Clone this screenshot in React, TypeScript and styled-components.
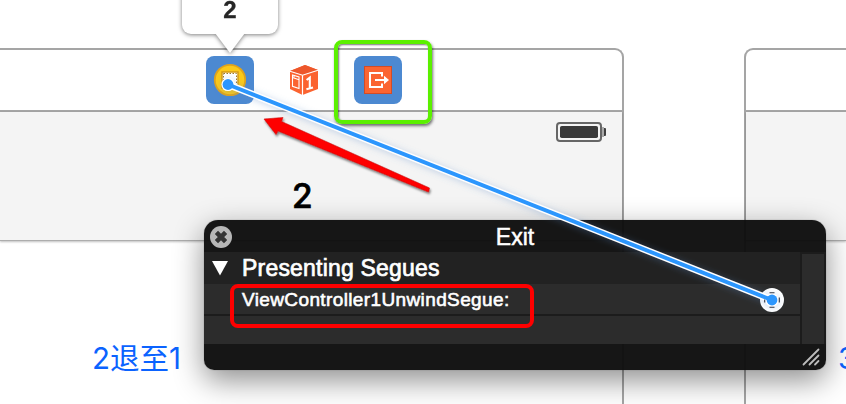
import React from 'react';
import styled, { createGlobalStyle } from 'styled-components';

const GlobalStyle = createGlobalStyle`
  *, *::before, *::after { box-sizing: border-box; }
  html, body { margin: 0; padding: 0; overflow: hidden; background: #fff; }
  body { font-family: 'Liberation Sans', 'Noto Sans CJK SC', sans-serif; }
`;

const Canvas = styled.main`
  position: relative;
  display: flex;
  justify-content: space-between;
  width: 846px;
  height: 404px;
  padding-top: 48px;
  overflow: hidden;
  background: #fff;
`;

const Scene = styled.section<{ $side: 'left' | 'right' }>`
  display: flex;
  flex-direction: column;
  width: ${p => (p.$side === 'left' ? 624 : 102)}px;
  height: 370px;
  border: 2px solid #a5a5a5;
  border-bottom: 0;
  ${p =>
    p.$side === 'left'
      ? 'border-left: 0; border-top-right-radius: 9px;'
      : 'border-right: 0; border-top-left-radius: 9px;'}
`;

const Dock = styled.header`
  display: flex;
  align-items: center;
  gap: 26px;
  height: 62px;
  padding: 0 0 0 206px;
  border-bottom: 2px solid #a5a5a5;
`;

const DockItem = styled.div<{ $selected?: boolean }>`
  display: grid;
  place-items: center;
  width: 48px;
  height: 48px;
  border-radius: 8px;
  background: ${p => (p.$selected ? '#4c89d1' : 'transparent')};
`;

const NavBar = styled.div`
  display: flex;
  flex-direction: column;
  height: 129px;
  background: #f4f4f4;
  border-bottom: 1px solid #adadad;
  box-shadow: 0 1px 2px rgba(0, 0, 0, 0.25);
`;

const StatusBar = styled.div`
  display: flex;
  justify-content: flex-end;
  height: 40px;
  padding: 10px 15px 0 0;
`;

const NavTitle = styled.h1`
  margin: 25px 0 0 292px;
  font: 500 33.5px/38px Inter, 'Liberation Sans', sans-serif;
  color: #000;
  -webkit-text-stroke: 0.7px #000;
`;

const SceneBody = styled.div`
  display: flex;
  align-items: flex-start;
  padding: 98px 0 0 92px;
`;

const SceneButton = styled.button`
  padding: 0;
  border: 0;
  background: none;
  color: #0b63ff;
  font: 400 29.5px/38px Inter, 'Noto Sans CJK SC', sans-serif;
  white-space: nowrap;
`;

const Bubble = styled.div`
  position: absolute;
  left: 182px;
  top: -20px;
  width: 96px;
  height: 74px;
  filter: drop-shadow(0 1px 2px rgba(0, 0, 0, 0.5));
`;

const BubbleBody = styled.div`
  display: flex;
  justify-content: center;
  height: 54px;
  padding-top: 16px;
  border-radius: 9px;
  background: #fff;
  color: #262626;
  font: bold 24px/27px 'Liberation Sans', sans-serif;
  -webkit-text-stroke: 0.3px #262626;
`;

const BubbleTail = styled.div`
  width: 0;
  height: 0;
  margin: -1px auto 0;
  border: 15px solid transparent;
  border-top: 20px solid #fff;
  border-bottom: 0;
`;

const Panel = styled.aside`
  position: absolute;
  left: 204px;
  top: 220px;
  width: 622px;
  height: 150px;
  display: flex;
  flex-direction: column;
  overflow: hidden;
  border-radius: 14px 14px 10px 10px;
  background: rgba(12, 12, 12, 0.96);
  color: #fff;
`;

const PanelShadow = styled.div`
  position: absolute;
  left: 204px;
  top: 220px;
  width: 622px;
  height: 150px;
  border-radius: 14px 14px 10px 10px;
  box-shadow: 0 0 1px rgba(0, 0, 0, 0.5), 0 10px 30px rgba(0, 0, 0, 0.45);
`;

const PanelTitle = styled.div`
  display: grid;
  grid-template-columns: 22px 1fr 22px;
  align-items: center;
  height: 32px;
  padding: 1px 6px 0;
  font-size: 23px;
  line-height: 28px;
  text-align: center;
  -webkit-text-stroke: 0.5px #fff;
`;

const PanelContent = styled.div`
  display: flex;
  height: 92px;
  background: #1c1c1c;
`;

const Outline = styled.div`
  width: 596px;
`;

const SectionRow = styled.div`
  display: flex;
  align-items: center;
  gap: 12px;
  height: 32px;
  padding-left: 8px;
  background: #222;
  font-size: 23px;
  letter-spacing: 0.2px;
  -webkit-text-stroke: 0.7px #fff;
`;

const SegueRow = styled.div<{ $last?: boolean }>`
  display: flex;
  align-items: center;
  justify-content: space-between;
  height: ${p => (p.$last ? 28 : 30)}px;
  margin-bottom: ${p => (p.$last ? 0 : 2)}px;
  padding: 2px 16px 0 38px;
  background: #2c2c2c;
  font-size: 19px;
  letter-spacing: 0.38px;
  -webkit-text-stroke: 0.6px #fff;
`;

const ScrollTrack = styled.div`
  width: 22px;
  height: 90px;
  margin: 2px 0 0 2px;
  background: #2c2c2c;
`;

const PanelFooter = styled.div`
  display: flex;
  justify-content: flex-end;
  padding: 4px 6px 0 0;
`;

const Highlight = styled.div<{ $kind: 'exit' | 'segue' }>`
  position: absolute;
  ${p =>
    p.$kind === 'exit'
      ? 'left: 334px; top: 40px; width: 98px; height: 84px; border: 4px solid #5bf000; border-radius: 8px; box-shadow: 1px 2px 3px rgba(0,0,0,.55), inset 1px 1px 2px rgba(0,0,0,.55);'
      : 'left: 230px; top: 284px; width: 304px; height: 44px; border: 4px solid #fe0000; border-radius: 8px;'}
`;

const Overlay = styled.svg`
  position: absolute;
  inset: 0;
  pointer-events: none;
`;

const ControllerIcon = () => (
  <svg width="34" height="34" viewBox="0 0 34 34">
    <circle cx="17" cy="17" r="15.2" fill="#fcc918" stroke="#dfa31c" strokeWidth="1.8" />
    <rect x="9" y="9" width="16" height="16" fill="#fff" stroke="#d59a14" strokeWidth="1.5" />
    <rect x="10.5" y="10.5" width="13" height="13" fill="none" stroke="#9c792c" strokeWidth="1" strokeDasharray="1.5 1.5" />
  </svg>
);

const ResponderIcon = () => (
  <svg width="30" height="32" viewBox="0 0 30 32">
    <path d="M1 7 L16 1 L29 6 V25 L13.500 31 L1 25Z" fill="#fb6330" />
    <path d="M1 7 L16 1 L29 6 L13.500 11Z" fill="#ed572b" />
    <path d="M1 7.300 L13.500 11.200 L29 6.300 M13.500 11.200 V31" fill="none" stroke="#fff" strokeWidth="1.2" />
    <path d="M3.500 11 L10 13 V24.500 L3.500 22.300Z M3.500 13.600 L10 15.700" fill="none" stroke="#fff" strokeWidth="1.1" />
    <path d="M5 11.500 V13.500" stroke="#fff" />
    <path d="M17.600 16 L20.800 13.600 V24.500 M17.400 25.300 L24 23.400" fill="none" stroke="#fff" strokeWidth="2.1" />
  </svg>
);

const ExitIcon = () => (
  <svg width="28" height="28" viewBox="0 0 28 28">
    <rect x=".5" y=".5" width="27" height="27" fill="#fb6532" stroke="#d24c27" />
    <path d="M18 10.500 V7 H6 V21 H18 V17.500 M11 14 H21.500" fill="none" stroke="#fff" strokeWidth="2" />
    <path d="M20 9.800 L25 14 L20 18.200Z" fill="#fff" />
  </svg>
);

const BatteryIcon = () => (
  <svg width="51" height="20" viewBox="0 0 51 20">
    <rect x="1" y="1" width="44" height="18" rx="3" fill="#f4f4f4" stroke="#666" strokeWidth="2" />
    <rect x="4" y="4" width="38" height="12" rx="1.8" fill="#393939" />
    <path d="M47 5 V15" stroke="#aaa" strokeWidth="2" />
    <path d="M48 6 H49 Q50 6 50 7 V13 Q50 14 49 14 H48Z" fill="#404040" />
  </svg>
);

const CloseIcon = () => (
  <svg width="22" height="22" viewBox="0 0 22 22">
    <circle cx="11" cy="11" r="11" fill="#b7b7b7" />
    <path d="M6.400 6.400 L15.600 15.600 M15.600 6.400 L6.400 15.600" stroke="#343434" strokeWidth="4.600" />
  </svg>
);

const Disclosure = () => (
  <svg width="18" height="16" viewBox="0 0 18 16">
    <path d="M0 1 H16 L8 15.500Z" fill="#fff" />
  </svg>
);

const Connector = () => (
  <svg width="24" height="24" viewBox="0 0 24 24">
    <circle cx="12" cy="12" r="12" fill="#fff" />
  </svg>
);

const ResizeGrip = () => (
  <svg width="18" height="18" viewBox="0 0 18 18">
    <path d="M1.500 16.500 L16.500 1.500 M7.500 16.500 L16.500 7.500 M13 16.500 L16.500 13" stroke="#bcbcbc" strokeWidth="1.800" strokeLinecap="round" />
  </svg>
);

const Annotations = () => (
  <Overlay width="846" height="404" viewBox="0 0 846 404">
    <defs>
      <filter id="arrowShadow" x="-20%" y="-30%" width="140%" height="160%">
        <feDropShadow dx="1" dy="2" stdDeviation="1.2" floodOpacity=".5" />
      </filter>
      <filter id="wireGlow" x="-5%" y="-10%" width="110%" height="120%">
        <feDropShadow dx="0" dy="1" stdDeviation="3.500" floodColor="#5b87c8" floodOpacity=".35" />
      </filter>
    </defs>
    <g filter="url(#wireGlow)">
      <path d="M228 84.500 L772 300" stroke="#fff" strokeWidth="6.800" />
      <circle cx="228" cy="84.500" r="6.600" fill="#fff" />
      <circle cx="772" cy="300" r="6.600" fill="#fff" />
    </g>
    <path d="M769.500 292.700 H774.500 M769.500 307.300 H774.500 M764.700 299.500 V302.500 M779.300 297.500 V302.500" stroke="#303746" strokeWidth="1.100" />
    <path d="M228 84.500 L772 300" stroke="#2c96fd" strokeWidth="3.900" />
    <circle cx="228" cy="84.500" r="5.400" fill="#2c96fd" />
    <circle cx="772" cy="300" r="5.400" fill="#2c96fd" />
    <path d="M264 119 L283 117.500 L281.500 121.500 L429.500 188 L428.500 192 L278 131 L276 134.500Z" fill="#fe0000" stroke="#ca1010" strokeWidth=".6" filter="url(#arrowShadow)" />
  </Overlay>
);

export default function App() {
  return (
    <>
      <GlobalStyle />
      <Canvas>
        <Scene $side="left">
          <Dock>
            <DockItem $selected><ControllerIcon /></DockItem>
            <DockItem><ResponderIcon /></DockItem>
            <DockItem $selected><ExitIcon /></DockItem>
          </Dock>
          <NavBar>
            <StatusBar><BatteryIcon /></StatusBar>
            <NavTitle>2</NavTitle>
          </NavBar>
          <SceneBody><SceneButton>2退至1</SceneButton></SceneBody>
        </Scene>
        <Scene $side="right">
          <Dock />
          <NavBar />
          <SceneBody><SceneButton>3</SceneButton></SceneBody>
        </Scene>
        <Bubble>
          <BubbleBody>2</BubbleBody>
          <BubbleTail />
        </Bubble>
        <PanelShadow />
        <Panel>
          <PanelTitle><CloseIcon /><span>Exit</span></PanelTitle>
          <PanelContent>
            <Outline>
              <SectionRow><Disclosure />Presenting Segues</SectionRow>
              <SegueRow>ViewController1UnwindSegue:<Connector /></SegueRow>
              <SegueRow $last />
            </Outline>
            <ScrollTrack />
          </PanelContent>
          <PanelFooter><ResizeGrip /></PanelFooter>
        </Panel>
        <Highlight $kind="exit" />
        <Highlight $kind="segue" />
        <Annotations />
      </Canvas>
    </>
  );
}
